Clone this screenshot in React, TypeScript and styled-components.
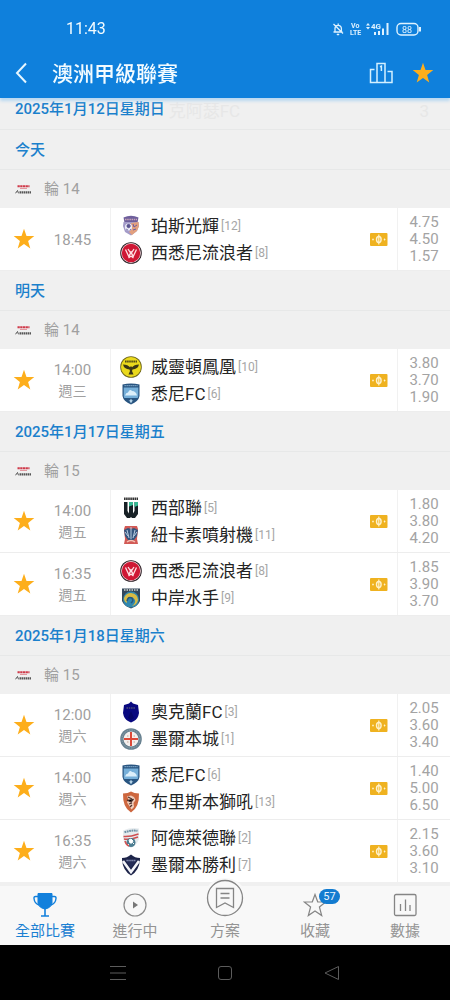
import React, { useState } from "react";
import styled, { createGlobalStyle } from "styled-components";

const blue = "#0f80dc";
const amber = "#fdae1b";
const fontStack = `Roboto, "Noto Sans CJK TC", sans-serif`;

const GlobalStyle = createGlobalStyle`
  *, *::before, *::after { box-sizing: border-box; }
  body { margin: 0; font-family: ${fontStack}; background: #f0f0f0; }
  h1, h2, h3, p, ul { margin: 0; padding: 0; font-weight: 400; }
  ul { list-style: none; }
  button { border: 0; padding: 0; background: none; color: inherit; font: inherit; cursor: pointer; }
  a { color: inherit; text-decoration: none; }
  svg { display: block; }
`;

const Screen = styled.div`
  display: flex;
  flex-direction: column;
  height: 100vh;
  overflow: hidden;
`;

const TopBar = styled.header`
  flex: none;
  position: relative;
  z-index: 1;
  background: ${blue};
  color: #f3fbff;
  box-shadow: 0 3px 3px #b9d8f1;
`;

const StatusBar = styled.div`
  display: flex;
  align-items: center;
  justify-content: space-between;
  height: 48px;
  padding: 10px 28px 0 66px;
`;

const Clock = styled.time`
  font-size: 16px;
  line-height: 20px;
`;

const AppBar = styled.div`
  display: flex;
  align-items: center;
  height: 50px;
  padding: 0 16px 0 14px;
`;

const IconButton = styled.button<{ $width: number }>`
  display: flex;
  flex: none;
  align-items: center;
  justify-content: center;
  width: ${(p) => p.$width}px;
  height: 32px;
`;

const Title = styled.h1`
  flex: 1;
  padding: 2px 0 0 24px;
  font-size: 21px;
  line-height: 32px;
  font-weight: 500;
`;

const Actions = styled.div`
  display: flex;
  gap: 19px;
`;

const List = styled.main`
  flex: 1;
  min-height: 0;
  overflow-y: auto;
  scrollbar-width: none;
  background: #f0f0f0;
`;

const DateHeading = styled.h2`
  height: 40px;
  padding-left: 15px;
  border-bottom: 1px solid #e7e8e8;
  font-size: 15px;
  line-height: 40px;
  font-weight: 500;
  color: #1b80cc;
`;

const PinnedDate = styled.div`
  display: flex;
  height: 32px;
  padding: 0 21px 0 15px;
  border-bottom: 1px solid #e7e8e8;
`;

const PinnedTitle = styled.h2`
  font-size: 15px;
  line-height: 23px;
  font-weight: 500;
  color: #1b80cc;
`;

const PassingRow = styled.div`
  flex: 1;
  display: flex;
  justify-content: space-between;
  padding-left: 4px;
  font-size: 17px;
  line-height: 26px;
  color: #e7e7e7;
`;

const Round = styled.h3`
  display: flex;
  align-items: center;
  gap: 12px;
  height: 38px;
  padding-left: 15px;
  font-size: 15px;
  line-height: 20px;
  color: #a0a0a0;
`;

const MatchRow = styled.li`
  display: grid;
  grid-template-columns: 48px 62px 1fr 36px 53px;
  height: 63px;
  background: #fff;
  border-bottom: 1px solid #ededed;
`;

const Cell = styled.div`
  display: flex;
  align-items: center;
  justify-content: center;
`;

const Kickoff = styled.div`
  display: flex;
  flex-direction: column;
  justify-content: center;
  padding: 2px 13px 0 0;
  font-size: 15px;
  line-height: 21px;
  text-align: center;
  color: #a0a0a0;
`;

const Weekday = styled.span`
  font-size: 14px;
`;

const Teams = styled.div`
  display: flex;
  flex-direction: column;
  justify-content: center;
  padding-left: 9px;
  border-left: 1px solid #f1f1f1;
`;

const Team = styled.div`
  display: flex;
  align-items: center;
  height: 27px;
  white-space: nowrap;
`;

const TeamName = styled.span`
  padding: 2px 0 0 9px;
  font-size: 17px;
  line-height: 27px;
  color: #242424;
`;

const Rank = styled.span`
  padding: 2px 0 0 2px;
  font-size: 12px;
  line-height: 27px;
  color: #a6a6a6;
`;

const Odds = styled.div`
  display: flex;
  flex-direction: column;
  justify-content: center;
  border-left: 1px solid #f1f1f1;
  font-size: 15px;
  line-height: 17px;
  text-align: center;
  color: #a3a3a3;
`;

const TabBar = styled.nav`
  flex: none;
  position: relative;
  z-index: 1;
  display: grid;
  grid-template-columns: repeat(5, 1fr);
  grid-template-rows: 100%;
  height: 63px;
  border-top: 4px solid #f0f0f0;
  background: #f8f8f8;
`;

const Tab = styled.a<{ $active?: boolean }>`
  display: flex;
  flex-direction: column;
  align-items: center;
  justify-content: flex-end;
  padding-bottom: 4px;
  font-size: 15px;
  line-height: 20px;
  gap: 3px;
  color: ${(p) => (p.$active ? "#1b80d2" : "#949494")};
`;

const TabIcon = styled.span`
  position: relative;
  display: block;
`;

const RaisedIcon = styled.span`
  display: flex;
  border-radius: 50%;
  background: #f8f8f8;
`;

const Badge = styled.span`
  position: absolute;
  left: 16px;
  top: -3px;
  width: 21px;
  border-radius: 8px;
  background: #137cd0;
  color: #e8f5ff;
  font-size: 11px;
  line-height: 15px;
  text-align: center;
`;

const SystemBar = styled.div`
  flex: none;
  display: flex;
  justify-content: center;
  height: 55px;
  background: #000;
`;

const SystemButton = styled.button`
  display: flex;
  align-items: center;
  justify-content: center;
  width: 107px;
`;

const StatusIcons = () => (
  <svg width="90" height="16" viewBox="0 0 90 16" fill="none" stroke="#dff2ff" aria-label="4G 88%">
    <path d="M1.500 11h9M3 10.500V7.500a3.200 3.200 0 0 1 6.400 0v3M5 13q1 1.200 2 0M6.200 2.500v1.500M1.500 3l9.500 9.500" strokeWidth="1.300" />
    <g fill="#dff2ff" stroke="none" fontFamily="Roboto, sans-serif" fontWeight="700">
      <text x="19" y="7" fontSize="7">Vo</text>
      <text x="18" y="14" fontSize="7">LTE</text>
      <text x="39" y="8" fontSize="8">4G</text>
      <path d="M34 4.500l2-2.500 2 2.500zM34 6l2 2.500L38 6zM42 11h2v3h-2zM46 10h2v4h-2zM50 7.500h2V14h-2zM54.500 2h2v12h-2z" />
      <text x="70" y="11.500" fontSize="9" fontWeight="400">88</text>
    </g>
    <rect x="65" y="2.500" width="21" height="11.500" rx="4" strokeWidth="1.400" />
    <path d="M88 6v4.500" strokeWidth="2" />
  </svg>
);

const BackIcon = () => (
  <svg width="14" height="22" viewBox="0 0 14 22" fill="none" stroke="#e6f6ff" strokeWidth="2">
    <path d="M12 1.500L3 11l9 9.500" />
  </svg>
);

const PodiumIcon = () => (
  <svg width="24" height="22" viewBox="0 0 24 22" fill="none" stroke="#d3f0ff" strokeWidth="1.500">
    <path d="M8 20.500V1.500h8v19M5.500 7.500H1.500v13h21.500v-11h-4.500M11 4.800l1.400-.6V9" />
  </svg>
);

const StarShape = ({ filled = true }: { filled?: boolean }) => (
  <svg width="22" height="22" viewBox="0 0 22 22" fill={filled ? amber : "none"} stroke={filled ? "none" : amber}>
    <path d="M11 .7l2.500 7.200 7.800.2-6.200 4.800 2.200 7.600L11 16.100l-6.300 4.400 2.200-7.600L.7 8.100l7.800-.2z" />
  </svg>
);

const LeagueLogo = () => (
  <svg width="17" height="11" viewBox="0 0 17 11" fill="none">
    <path d="M2.500 2.200h12" stroke="#cf3a4a" strokeWidth="2" strokeDasharray="2.300 .4" />
    <path d="M5 4.400h7" stroke="#e08d95" strokeWidth="1" />
    <path d="M.5 9.300L2.500 6.500l1 2.800" stroke="#555" />
    <path d="M4.500 8.300h12" stroke="#555" strokeWidth="2.200" strokeDasharray="1.500 .5" />
  </svg>
);

const TicketIcon = () => (
  <svg width="18" height="13" viewBox="0 0 18 13" fill="none" aria-label="投注">
    <rect width="17.500" height="13" rx="1" fill="#efb220" />
    <ellipse cx="8.800" cy="6.500" rx="2.300" ry="3" stroke="#fff2cc" strokeWidth="1.400" />
    <path d="M8.800 1.500v10" stroke="#fff2cc" strokeWidth="1.200" />
    <path d="M2 6.500l1-1.300 1 1.300-1 1.300zM13.600 6.500l1-1.300 1 1.300-1 1.300z" fill="#fff2cc" />
  </svg>
);

type Club = "perth" | "wanderers" | "phoenix" | "sydney" | "western" | "jets" | "mariners" | "auckland" | "city" | "roar" | "adelaide" | "victory";

const crests: Record<Club, React.ReactNode> = {
  perth: (
    <>
      <path d="M3.500 2.500Q11-1 18.500 2.500l-1 5H4.500z" fill="#6e5f9c" />
      <path d="M3.500 7h15l.5 4-2 5-6 4.500L5 17l-2-6z" fill="#a39bc8" />
      <path d="M11 8l7.500-1 .5 4-2 5-5 4-3-3 3-3z" fill="#e2a07e" />
      <path d="M5 4.500h12" stroke="#c9a5b9" strokeWidth="1.500" strokeDasharray="1.500 .7" />
      <circle cx="8.500" cy="12" r="3.600" fill="#ecebf6" />
      <path d="M7 10l2-1 1.500 2-1.500 2-2-1zM6 14l2 1M11 14l-1 1" fill="#59538f" stroke="#59538f" strokeWidth=".7" />
      <path d="M13 9l1 3 3-2M13 15l3-1" stroke="#6d5ba0" fill="none" />
    </>
  ),
  wanderers: (
    <>
      <circle cx="11" cy="11" r="10.800" fill="#26191f" />
      <circle cx="11" cy="11" r="9.900" fill="#f3dfe2" />
      <circle cx="11" cy="11" r="9.200" fill="#cf1734" />
      <path d="M5.500 7.500l3.300 7L11 10l2.200 4.500 3.300-7M8 7l3 4.500L14 7M8.500 16l2.500-2 2.500 2" fill="none" stroke="#ffdfe3" strokeWidth="1.300" />
    </>
  ),
  phoenix: (
    <>
      <circle cx="11" cy="11" r="10.800" fill="#6b631a" />
      <circle cx="11" cy="11" r="10" fill="#ead91c" />
      <path d="M5 5.500h12" stroke="#534c16" strokeWidth="1.800" strokeDasharray="1.600 .5" />
      <path d="M3 8.500q5 .3 7 2.800l1-1.300 1 1.300q2-2.500 7-2.800-1 4.500-6.500 5l-.5 1.500 1.500 3.500h-5l1.500-3.500-.5-1.500Q4 13 3 8.500z" fill="#3a3617" />
    </>
  ),
  sydney: (
    <>
      <path d="M2.500 1.500Q11-.5 19.500 1.500V13q-1 5.500-8.500 8.500Q3.500 18.500 2.500 13z" fill="#285480" />
      <path d="M3.700 4.500h14.600V13q0 1-.7 2H4.400q-.7-1-.7-2z" fill="#76afd9" />
      <path d="M4.500 2.700h13" stroke="#9cc3e0" strokeDasharray="1.300 .7" />
      <path d="M5 12.500q1-3 3-3 2-4 4-1.500 4 0 5 4.500z" fill="#dceffb" />
      <path d="M11 15.500l1 2 1.500 0-1.500 1-1 2-1-2-1.500-1h1.500z" fill="#bcd9ec" />
    </>
  ),
  western: (
    <>
      <path d="M4 1.800h14" stroke="#333" strokeWidth="2.500" strokeDasharray="1.600 .5" />
      <path d="M4 5h3.500v9L9 16.500V8h4v8.500l1.500-2.500V5H18v12l-3 4h-3l-1-1-1 1H7l-3-4z" fill="#182126" />
      <path d="M9 5h4v3L9 9.500zM14.500 5H18v3.500l-3.500 1.500z" fill="#35b993" />
    </>
  ),
  jets: (
    <>
      <path d="M5 2h12l1 3-1 10 1 5H4l1-5L4 5z" fill="#d25a56" />
      <path d="M4 6l4-2 3 1 3-1 4 2-1 6-3 4H8l-3-4z" fill="#35567f" />
      <path d="M11 3v12M7 6l2 8M15 6l-2 8M5 8l3 4M17 8l-3 4" stroke="#b9cde1" strokeWidth="1" />
      <path d="M7 18q4-3 8 0" stroke="#f3c3b4" strokeWidth="1.500" fill="none" />
    </>
  ),
  mariners: (
    <>
      <path d="M2 1.500h18V14q-2 5-9 7.500Q4 19 2 14z" fill="#33475a" />
      <path d="M4 3h14" stroke="#d6d7cf" strokeWidth="1.500" strokeDasharray="1.500 1" />
      <circle cx="11" cy="12.500" r="8" fill="#3187ae" />
      <path d="M4 11q2-5 7-5 7 1 7 7-1 5-6 6 4-3 3-6-2-4-6-2-3 1-2 5-3-1-3-5z" fill="#d9bb43" />
      <path d="M7 14q1-5 5-3 2 3-1 5" fill="none" stroke="#29577c" strokeWidth="1.500" />
    </>
  ),
  auckland: (
    <>
      <path d="M11 .5l2 2 5 1.500 1 8q-1 6-5 8l-3 1.500L8 20q-4-2-5-8L4 4l5-1.500z" fill="#08087f" />
      <path d="M6.500 7h9" stroke="#3d3e79" strokeWidth="2" strokeDasharray="1.500 .8" />
      <path d="M11 10l-3 7 3 2 3-2z" fill="#050568" />
    </>
  ),
  city: (
    <>
      <circle cx="11" cy="11" r="10.800" fill="#67808f" />
      <circle cx="11" cy="11" r="9" fill="none" stroke="#8fa5b1" strokeDasharray="1.500 1" />
      <circle cx="11" cy="11" r="7.500" fill="#f4efed" />
      <path d="M11 4v14M4 11h14" stroke="#dc4938" strokeWidth="2" />
      <path d="M7 8h1.500M13.500 8H15M7 14h1.500M13.500 14H15" stroke="#c6a595" />
    </>
  ),
  roar: (
    <>
      <path d="M3 2.500q5 0 8-2 3 2 8 2 .5 14-8 19Q2.500 16.500 3 2.500z" fill="#cd673f" />
      <path d="M7 5.500l4-1 3 1.500 1.500 3-2 3 .5 4-2.500 2.500-2.500-4-2-3 1.500-3z" fill="#f0cdbb" />
      <path d="M8 6l4 2M7 9l4 2 2.500-3M9 13l3-1M10 16l2-2" stroke="#4e3430" strokeWidth="1.300" />
    </>
  ),
  adelaide: (
    <>
      <path d="M3 3.500Q11 0 19 1.500V12q-2 6-8 9-6-3-8-9z" fill="#e7ecef" />
      <path d="M4.500 5.300Q11 3 17.500 3.800" stroke="#6f91a5" strokeWidth="2" fill="none" strokeDasharray="1.800 .6" />
      <path d="M3.500 9.500Q10 10 18.500 7M4 12q6 1 14-2" stroke="#cf4e50" strokeWidth="1.500" fill="none" />
      <circle cx="11" cy="15.500" r="4.500" fill="#4d7e92" />
      <path d="M9 13l2-1 2 2-1 2h-2zM8 17l1 1M13 17l1-1" fill="#fff" stroke="#fff" />
      <path d="M5 14q1 4 4 5" stroke="#d35353" strokeWidth="1.500" fill="none" />
    </>
  ),
  victory: (
    <>
      <path d="M2 4q5 0 9-3.500Q15 4 20 4q0 12-9 17.500Q2 16 2 4z" fill="#1d2449" />
      <path d="M3 7l8 11 8-11" stroke="#f4f5fa" strokeWidth="2.600" fill="none" />
      <path d="M5 5.500h12L11 14z" fill="#252d58" />
      <path d="M6.500 6.500h9" stroke="#8d95b8" strokeWidth="1.300" strokeDasharray="1.300 .6" />
    </>
  ),
};

const Crest = ({ club }: { club: Club }) => (
  <svg width="22" height="22" viewBox="0 0 22 22" aria-hidden="true">{crests[club]}</svg>
);

const TrophyIcon = () => (
  <svg width="24" height="26" viewBox="0 0 24 26" fill="none" stroke="#1280dc">
    <path d="M5 1.500h14V11q-1 5-7 6-6-1-7-6z" fill="#1280dc" />
    <path d="M5 4.500H2.500Q.8 4.500 1 6.500q.5 5 5 6.500M19 4.500h2.500q1.700 0 1.500 2-.5 5-5 6.500" strokeWidth="1.400" />
    <path d="M12 16v7.500M8 24h8" strokeWidth="1.600" />
  </svg>
);

const PlayIcon = () => (
  <svg width="24" height="26" viewBox="0 0 24 26" fill="none" stroke="#8b8b8b" strokeWidth="1.200">
    <circle cx="12" cy="13" r="11" />
    <path d="M10 9.500v7l5-3.500z" fill="#777" stroke="none" />
  </svg>
);

const PlanIcon = () => (
  <svg width="42" height="40" viewBox="0 0 42 40" fill="none" stroke="#858585" strokeWidth="1.300">
    <circle cx="21" cy="20" r="17.500" />
    <path d="M12.500 10.500h17v19L21 25l-8.500 4.500zM16.500 15.500h9M16.500 20h9" />
  </svg>
);

const FavouriteIcon = () => (
  <svg width="24" height="26" viewBox="0 0 24 26" fill="none" stroke="#858585" strokeWidth="1.200">
    <path d="M12 2.500l2.700 7.300 8 .2-6.300 5 2.300 8.500L12 19l-6.700 4.500L7.600 15l-6.300-5 8-.2z" />
  </svg>
);

const StatsIcon = () => (
  <svg width="24" height="26" viewBox="0 0 24 26" fill="none" stroke="#858585" strokeWidth="1.300">
    <rect x="1.500" y="2.500" width="21.500" height="21" rx="1.500" />
    <path d="M7.500 12v7M12.500 7.500V19M17 13v6" />
  </svg>
);

type Side = [Club, string, number];
interface Match {
  time: string;
  day?: string;
  home: Side;
  away: Side;
  odds: string[];
}
interface Day {
  title: string;
  round: string;
  matches: Match[];
}

const days: Day[] = [
  {
    title: "今天",
    round: "輪 14",
    matches: [{ time: "18:45", home: ["perth", "珀斯光輝", 12], away: ["wanderers", "西悉尼流浪者", 8], odds: ["4.75", "4.50", "1.57"] }],
  },
  {
    title: "明天",
    round: "輪 14",
    matches: [{ time: "14:00", day: "週三", home: ["phoenix", "威靈頓鳳凰", 10], away: ["sydney", "悉尼FC", 6], odds: ["3.80", "3.70", "1.90"] }],
  },
  {
    title: "2025年1月17日星期五",
    round: "輪 15",
    matches: [
      { time: "14:00", day: "週五", home: ["western", "西部聯", 5], away: ["jets", "紐卡素噴射機", 11], odds: ["1.80", "3.80", "4.20"] },
      { time: "16:35", day: "週五", home: ["wanderers", "西悉尼流浪者", 8], away: ["mariners", "中岸水手", 9], odds: ["1.85", "3.90", "3.70"] },
    ],
  },
  {
    title: "2025年1月18日星期六",
    round: "輪 15",
    matches: [
      { time: "12:00", day: "週六", home: ["auckland", "奧克蘭FC", 3], away: ["city", "墨爾本城", 1], odds: ["2.05", "3.60", "3.40"] },
      { time: "14:00", day: "週六", home: ["sydney", "悉尼FC", 6], away: ["roar", "布里斯本獅吼", 13], odds: ["1.40", "5.00", "6.50"] },
      { time: "16:35", day: "週六", home: ["adelaide", "阿德萊德聯", 2], away: ["victory", "墨爾本勝利", 7], odds: ["2.15", "3.60", "3.10"] },
    ],
  },
];

const FavouriteButton = () => {
  const [on, setOn] = useState(true);
  return (
    <IconButton $width={22} type="button" aria-label="收藏" aria-pressed={on} onClick={() => setOn(!on)}>
      <StarShape filled={on} />
    </IconButton>
  );
};

const TeamLine = ({ side: [club, name, rank] }: { side: Side }) => (
  <Team>
    <Crest club={club} />
    <TeamName>{name}</TeamName>
    <Rank>[{rank}]</Rank>
  </Team>
);

const MatchItem = ({ match }: { match: Match }) => (
  <MatchRow>
    <Cell>
      <FavouriteButton />
    </Cell>
    <Kickoff>
      <time>{match.time}</time>
      {match.day && <Weekday>{match.day}</Weekday>}
    </Kickoff>
    <Teams>
      <TeamLine side={match.home} />
      <TeamLine side={match.away} />
    </Teams>
    <Cell>
      <TicketIcon />
    </Cell>
    <Odds>
      {match.odds.map((value, i) => (
        <span key={i}>{value}</span>
      ))}
    </Odds>
  </MatchRow>
);

export default function App() {
  return (
    <Screen>
      <GlobalStyle />
      <TopBar>
        <StatusBar>
          <Clock>11:43</Clock>
          <StatusIcons />
        </StatusBar>
        <AppBar>
          <IconButton $width={14} type="button" aria-label="返回">
            <BackIcon />
          </IconButton>
          <Title>澳洲甲級聯賽</Title>
          <Actions>
            <IconButton $width={24} type="button" aria-label="排名">
              <PodiumIcon />
            </IconButton>
            <FavouriteButton />
          </Actions>
        </AppBar>
      </TopBar>

      <List>
        <PinnedDate>
          <PinnedTitle>2025年1月12日星期日</PinnedTitle>
          <PassingRow aria-hidden="true">
            <span>克阿瑟FC</span>
            <span>3</span>
          </PassingRow>
        </PinnedDate>
        {days.map((day) => (
          <section key={day.title}>
            <DateHeading>{day.title}</DateHeading>
            <Round>
              <LeagueLogo />
              {day.round}
            </Round>
            <ul>
              {day.matches.map((match) => (
                <MatchItem key={match.home[1]} match={match} />
              ))}
            </ul>
          </section>
        ))}
      </List>

      <TabBar>
        <Tab href="#all" $active aria-current="page">
          <TabIcon><TrophyIcon /></TabIcon>
          全部比賽
        </Tab>
        <Tab href="#live">
          <TabIcon><PlayIcon /></TabIcon>
          進行中
        </Tab>
        <Tab href="#plans">
          <RaisedIcon><PlanIcon /></RaisedIcon>
          方案
        </Tab>
        <Tab href="#favourites">
          <TabIcon>
            <FavouriteIcon />
            <Badge>57</Badge>
          </TabIcon>
          收藏
        </Tab>
        <Tab href="#stats">
          <TabIcon><StatsIcon /></TabIcon>
          數據
        </Tab>
      </TabBar>

      <SystemBar>
        <SystemButton type="button" aria-label="選單">
          <svg width="16" height="16" viewBox="0 0 16 16" stroke="#5c5c5c">
            <path d="M0 1.500h16M0 8h16M0 14.500h16" />
          </svg>
        </SystemButton>
        <SystemButton type="button" aria-label="主畫面">
          <svg width="16" height="16" viewBox="0 0 16 16" fill="none" stroke="#5c5c5c">
            <rect x="1.500" y="1.500" width="13" height="13" rx="2.500" />
          </svg>
        </SystemButton>
        <SystemButton type="button" aria-label="上一頁">
          <svg width="16" height="16" viewBox="0 0 16 16" fill="none" stroke="#5c5c5c">
            <path d="M14.500 1.500v13L1 8z" strokeLinejoin="round" />
          </svg>
        </SystemButton>
      </SystemBar>
    </Screen>
  );
}
